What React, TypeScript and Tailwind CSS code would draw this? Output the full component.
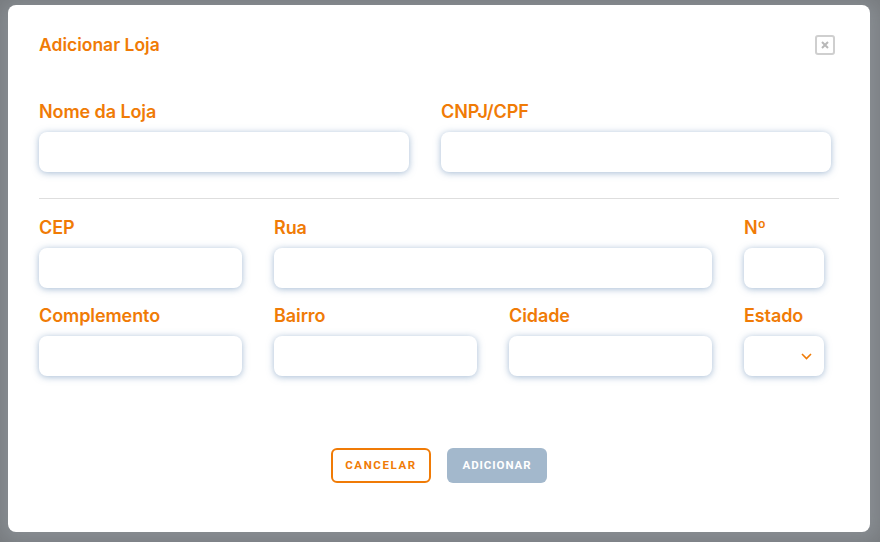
import React from "react";

const font = { fontFamily: "Inter, 'Liberation Sans', sans-serif" };
const btnFont = { fontFamily: "Roboto, 'Liberation Sans', sans-serif" };

function Field({
  label,
  className = "",
  select = false,
}: {
  label: string;
  className?: string;
  select?: boolean;
}) {
  return (
    <div className={`flex flex-col ${className}`}>
      <label className="mb-[10px] h-[21px] text-[18px] font-semibold leading-[21px] tracking-[-0.005em] text-[#f07b06]">
        {label}
      </label>
      <div className="relative h-[40px] rounded-[8px] bg-white shadow-[0_1px_7px_rgba(90,130,175,0.55)]">
        {select ? (
          <svg
            className="absolute right-[12px] top-[17px]"
            width="11"
            height="7"
            viewBox="0 0 11 7"
            fill="none"
          >
            <path d="M1 1l4.5 4.5L10 1" stroke="#f07b06" strokeWidth="1.6" />
          </svg>
        ) : null}
      </div>
    </div>
  );
}

export default function App() {
  return (
    <div
      className="flex h-[542px] w-[880px] items-start bg-[#8b9095] pl-[8px] pt-[5px] shadow-[inset_0_0_24px_rgba(60,60,60,0.3)]"
      style={font}
    >
      <div className="flex h-[527px] w-[862px] flex-col rounded-[8px] bg-white pl-[31px] pr-[31px] pt-[26px]">
        {/* header */}
        <div className="flex items-center justify-between">
          <h2 className="text-[17.5px] font-semibold leading-[28px] text-[#f07b06]">Adicionar Loja</h2>
          <button
            type="button"
            className="mr-[4px] flex h-[20px] w-[20px] items-center justify-center rounded-[3px] border-2 border-[#cfcfcf]"
          >
            <svg width="8" height="8" viewBox="0 0 8 8">
              <path d="M1 1l6 6M7 1L1 7" stroke="#b8b8b8" strokeWidth="2" />
            </svg>
          </button>
        </div>

        {/* row 1 */}
        <div className="mt-[42px] flex gap-[32px]">
          <Field label="Nome da Loja" className="w-[370px]" />
          <Field label="CNPJ/CPF" className="w-[390px]" />
        </div>

        <div className="mt-[26px] h-px w-[800px] bg-[#dedede]" />

        {/* address */}
        <div className="mt-[18px] grid grid-cols-[203px_203px_203px_80px] gap-x-[32px] gap-y-[17px]">
          <Field label="CEP" />
          <Field label="Rua" className="col-span-2" />
          <Field label="Nº" />
          <Field label="Complemento" />
          <Field label="Bairro" />
          <Field label="Cidade" />
          <Field label="Estado" select />
        </div>

        {/* actions */}
        <div className="mt-[72px] flex justify-center gap-[16px]" style={btnFont}>
          <button
            type="button"
            className="h-[35px] w-[100px] rounded-[6px] border-2 border-[#f07b06] text-[11.5px] font-bold tracking-[0.14em] text-[#f07b06]"
          >
            CANCELAR
          </button>
          <button
            type="button"
            className="h-[35px] w-[100px] rounded-[6px] bg-[#a3b8cc] text-[11.5px] font-bold tracking-[0.08em] text-white"
          >
            ADICIONAR
          </button>
        </div>
      </div>
    </div>
  );
}
